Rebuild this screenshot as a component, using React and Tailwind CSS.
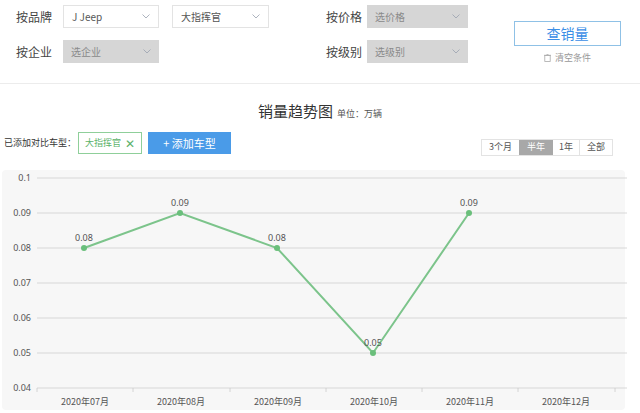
import React from "react";

const font = { fontFamily: '"Noto Sans CJK SC", "Noto Sans", sans-serif' };

const Chevron = () => (
  <svg width="8" height="5" viewBox="0 0 8 5" className="text-gray-400">
    <path d="M0.5 0.5 L4 4 L7.5 0.5" fill="none" stroke="currentColor" strokeWidth="0.8" />
  </svg>
);

const Select = ({ text, w, disabled }) => (
  <div
    className={`h-[23px] flex items-center justify-between px-2 text-[10px] ${w} ${
      disabled ? "bg-[#d6d6d6] text-[#8a8a8a]" : "bg-white border border-[#e3e3e3] text-[#555]"
    }`}
  >
    <span>{text}</span>
    <Chevron />
  </div>
);

const xs = [85, 181, 278, 374, 470, 566];
const ys = [0.1, 0.09, 0.08, 0.07, 0.06, 0.05, 0.04];
const yOf = (v) => 178 + ((0.1 - v) / 0.01) * 35 - 170;
const data = [0.08, 0.09, 0.08, 0.05, 0.09];

const App = () => {
  return (
    <div className="w-[640px] h-[413px] bg-white overflow-hidden relative" style={font}>
      <div className="flex pt-[5px] pl-[16px] h-[84px] border-b border-[#ececec]">
        <div className="flex flex-col gap-[12px] w-[296px]">
          <div className="flex items-center">
            <span className="text-[12px] text-[#444] w-[47px]">按品牌</span>
            <Select text="J Jeep" w="w-[96px]" />
            <div className="w-[13px]" />
            <Select text="大指挥官" w="w-[97px]" />
          </div>
          <div className="flex items-center">
            <span className="text-[12px] text-[#444] w-[47px]">按企业</span>
            <Select text="选企业" w="w-[96px]" disabled />
          </div>
        </div>
        <div className="flex flex-col gap-[12px] ml-[14px]">
          <div className="flex items-center">
            <span className="text-[12px] text-[#444] w-[41px]">按价格</span>
            <Select text="选价格" w="w-[101px]" disabled />
          </div>
          <div className="flex items-center">
            <span className="text-[12px] text-[#444] w-[41px]">按级别</span>
            <Select text="选级别" w="w-[101px]" disabled />
          </div>
        </div>
        <div className="ml-[46px] mt-[16px] flex flex-col items-center">
          <div className="w-[107px] h-[25px] border border-[#8fc1e6] flex items-center justify-center text-[14px] text-[#3a8ee6]">
            查销量
          </div>
          <div className="mt-[5px] text-[9px] text-[#999] flex items-center gap-1">
            <svg width="7" height="8" viewBox="0 0 7 8">
              <rect x="0.8" y="1.5" width="5.4" height="6" fill="none" stroke="#aaa" strokeWidth="0.8" />
              <path d="M0 1.3 H7 M2.5 0.4 H4.5" stroke="#aaa" strokeWidth="0.8" />
            </svg>
            清空条件
          </div>
        </div>
      </div>

      <div className="flex items-end justify-center mt-[19px] gap-1">
        <span className="text-[15px] text-[#333] leading-none">销量趋势图</span>
        <span className="text-[9px] text-[#555] leading-none">单位：万辆</span>
      </div>

      <div className="flex items-center mt-[14px] px-[4px] h-[22px]">
        <span className="text-[9px] text-[#333]">已添加对比车型：</span>
        <div className="h-[22px] border border-[#8fcf9a] flex items-center px-[6px] gap-[4px] text-[9px] text-[#5bb26a] ml-[2px]">
          大指挥官 <span className="text-[12px] leading-none">✕</span>
        </div>
        <div className="h-[22px] w-[83px] bg-[#4a9be8] text-white text-[11px] flex items-center justify-center ml-[6px]">
          + 添加车型
        </div>
        <div className="ml-auto mr-[23px] flex border border-[#e3e3e3] text-[9px] text-[#555] h-[17px] mt-[8px]">
          <span className="px-[7px] flex items-center">3个月</span>
          <span className="px-[8px] flex items-center bg-[#a8a8a8] text-white">半年</span>
          <span className="px-[6px] flex items-center">1年</span>
          <span className="px-[7px] flex items-center border-l border-[#e3e3e3]">全部</span>
        </div>
      </div>

      <div className="absolute left-[2px] top-[170px] w-[623px] h-[240px] bg-[#f7f7f7] rounded-sm">
        <svg width="623" height="240" viewBox="0 0 623 240" className="absolute -left-[2px] top-0" style={{ overflow: "visible" }}>
          {ys.map((v) => (
            <g key={v}>
              <line x1="37" x2="627" y1={yOf(v)} y2={yOf(v)} stroke="#cfcfcf" strokeWidth="0.8" />
              <text x="31" y={yOf(v) + 3} textAnchor="end" fontSize="9" fill="#555" fontFamily="Noto Sans">
                {v}
              </text>
            </g>
          ))}
          {[37, 133, 230, 326, 422, 518, 615].map((x) => (
            <line key={x} x1={x} x2={x} y1={218} y2={222} stroke="#ccc" strokeWidth="0.8" />
          ))}
          {xs.map((x, i) => (
            <text key={x} x={x} y="235" textAnchor="middle" fontSize="9" fill="#555" fontFamily="Noto Sans CJK SC">
              {`2020年${["07", "08", "09", "10", "11", "12"][i]}月`}
            </text>
          ))}
          <polyline
            points={data.map((v, i) => `${xs[i] - 1},${yOf(v)}`).join(" ")}
            fill="none"
            stroke="#7cc48b"
            strokeWidth="2"
          />
          {data.map((v, i) => (
            <g key={i}>
              <circle cx={xs[i] - 1} cy={yOf(v)} r="3" fill="#6abf7b" />
              <text x={xs[i] - 1} y={yOf(v) - 7} textAnchor="middle" fontSize="9" fill="#555" fontFamily="Noto Sans">
                {v}
              </text>
            </g>
          ))}
        </svg>
      </div>
    </div>
  );
};

export default App;
